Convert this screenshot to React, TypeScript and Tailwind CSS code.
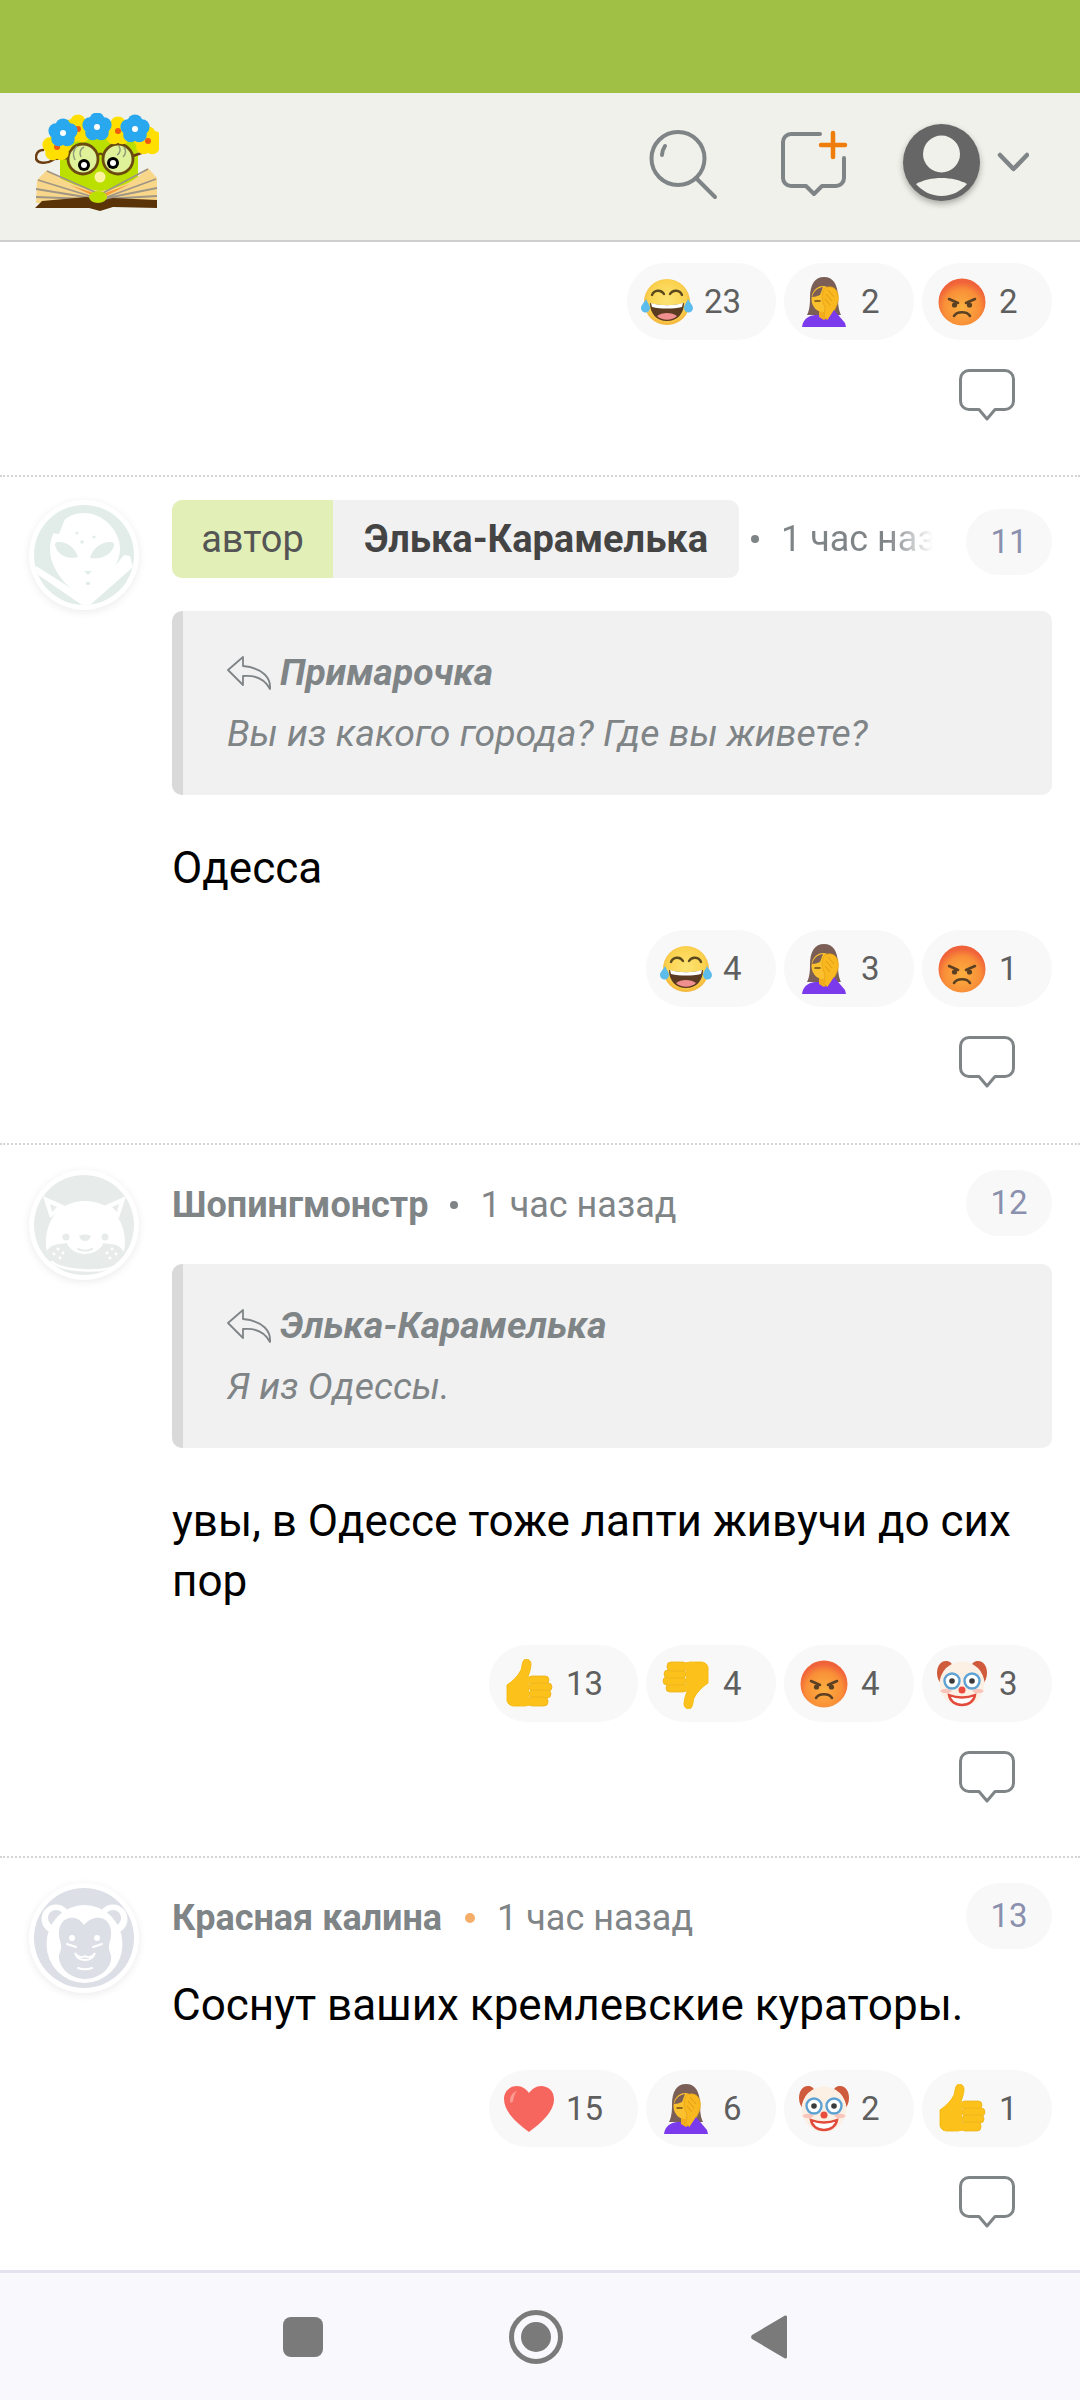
import React from "react";

const font = { fontFamily: "Roboto, 'Noto Sans', sans-serif" };

function Joy() {
  return (
    <svg width="52" height="48" viewBox="0 0 52 48" className="shrink-0">
      <defs>
        <radialGradient id="joyG" cx="50%" cy="45%" r="55%">
          <stop offset="0%" stopColor="#fde373" />
          <stop offset="75%" stopColor="#fbd24f" />
          <stop offset="100%" stopColor="#f3b43a" />
        </radialGradient>
      </defs>
      <circle cx="26" cy="24" r="23" fill="url(#joyG)" />
      <path d="M11 17c2-5 9-6 12-1M29 16c3-5 10-4 12 1" fill="none" stroke="#5c4a1e" strokeWidth="2.4" strokeLinecap="round" />
      <path d="M9 25c10 3 24 3 34 0c0 11-7 18-17 18S9 36 9 25z" fill="#5a3a20" />
      <path d="M10 25c10 3 22 3 32 0l-1 4c-9 2-21 2-30 0z" fill="#fff" />
      <path d="M16 38c5-4 15-4 20 0c-5 5-15 5-20 0z" fill="#ef8f8f" />
      <path d="M5 21c-2 4-5 6-5 9a4.500 4.500 0 0 0 9 0c0-3-3-6-4-9z" fill="#5cbcec" />
      <path d="M47 21c2 4 5 6 5 9a4.500 4.500 0 0 1-9 0c0-3 3-6 4-9z" fill="#5cbcec" />
    </svg>
  );
}

function Facepalm() {
  return (
    <svg width="46" height="52" viewBox="0 0 46 52" className="shrink-0">
      <path d="M9 22C9 8 14 1 23 1s14 7 14 21c0 8 1 13 3 17H6c2-4 3-9 3-17z" fill="#7b5f57" />
      <path d="M1 51c1-7 5-11 13-12h14l6 4 6 8z" fill="#7c3aed" />
      <path d="M18 32h10v9l-5 3-5-3z" fill="#f3ad1c" />
      <ellipse cx="22" cy="23" rx="11.500" ry="13" fill="#fbc02d" />
      <path d="M11 21c2-6 5-9 11-10l-3 8c-3 1-5 2-8 2z" fill="#7b5f57" />
      <path d="M14 25h5" stroke="#6b4a1a" strokeWidth="1.500" strokeLinecap="round" />
      <path d="M23 13c3-3 9-3 12 1 3 4 3 10 1 15l-4 8-5 7-4-3 1-10c-3-5-4-12-1-18z" fill="#f9b81f" stroke="#e2a016" strokeWidth="0.700" />
      <path d="M27 14l6 7M25 18l6 7M24 23l5 6" stroke="#d99a16" strokeWidth="0.900" fill="none" />
      <path d="M25 51l2-8 6-9 11 13 1 4z" fill="#7c3aed" />
    </svg>
  );
}

function Angry() {
  return (
    <svg width="48" height="48" viewBox="0 0 48 48" className="shrink-0">
      <defs>
        <radialGradient id="angG" cx="50%" cy="62%" r="55%">
          <stop offset="0%" stopColor="#fbb040" />
          <stop offset="70%" stopColor="#f98f38" />
          <stop offset="100%" stopColor="#f0623a" />
        </radialGradient>
      </defs>
      <circle cx="24" cy="24" r="23.500" fill="url(#angG)" />
      <path d="M11 21l9 4M37 21l-9 4" stroke="#5b4023" strokeWidth="2.600" strokeLinecap="round" />
      <circle cx="16.500" cy="27" r="2.600" fill="#5b4023" />
      <circle cx="31.500" cy="27" r="2.600" fill="#5b4023" />
      <path d="M16 38c3-5 13-5 16 0" fill="none" stroke="#5b4023" strokeWidth="2.600" strokeLinecap="round" />
    </svg>
  );
}

function ThumbShape() {
  return (
    <>
      <path d="M2 26c6-4 11-9 14-15 1-3 1-8 3-10 3-2 7 0 7 4 0 5-2 9-3 13h-2v29H9c-4 0-7-3-7-6z" fill="#fcc21b" stroke="#f4b400" strokeWidth="0.800" />
      <rect x="23" y="17" width="21" height="8" rx="4" fill="#fcc21b" stroke="#eeb21d" strokeWidth="0.800" />
      <rect x="24" y="24" width="23" height="8" rx="4" fill="#fcc21b" stroke="#eeb21d" strokeWidth="0.800" />
      <rect x="24" y="31" width="22" height="8" rx="4" fill="#fcc21b" stroke="#eeb21d" strokeWidth="0.800" />
      <rect x="23" y="38" width="20" height="9" rx="4" fill="#fcc21b" stroke="#eeb21d" strokeWidth="0.800" />
      <path d="M15 20c3-1 6-2 9-2v29h-9z" fill="#fcc21b" />
    </>
  );
}

function ThumbUp() {
  return (
    <svg width="48" height="50" viewBox="0 0 48 50" className="shrink-0">
      <ThumbShape />
    </svg>
  );
}

function ThumbDown() {
  return (
    <svg width="48" height="50" viewBox="0 0 48 50" className="shrink-0">
      <g transform="rotate(180 24 25)">
        <ThumbShape />
      </g>
    </svg>
  );
}

function Clown() {
  return (
    <svg width="52" height="50" viewBox="0 0 52 50" className="shrink-0">
      <path d="M10 2c-6 0-9 6-9 12 0 5 2 9 5 12l10-20c0-2-3-4-6-4zM42 2c6 0 9 6 9 12 0 5-2 9-5 12L36 6c0-2 3-4 6-4z" fill="#cf5a3c" />
      <circle cx="26" cy="25" r="22.500" fill="#fcf0e4" />
      <path d="M4 32a8 7 0 0 0 12 0 8 7 0 0 0-12 0zM36 32a8 7 0 0 0 12 0 8 7 0 0 0-12 0z" fill="#f7b9b0" opacity="0.800" />
      <circle cx="16" cy="22" r="7.500" fill="#fff" stroke="#5ea2d3" strokeWidth="2.400" />
      <circle cx="36" cy="22" r="7.500" fill="#fff" stroke="#5ea2d3" strokeWidth="2.400" />
      <circle cx="16" cy="22" r="2.800" fill="#3b3b3b" />
      <circle cx="36" cy="22" r="2.800" fill="#3b3b3b" />
      <circle cx="26" cy="31" r="3.500" fill="#ea4d3d" />
      <path d="M13 36c8 3 18 3 26 0-1 6-6 10-13 10s-12-4-13-10z" fill="#fff" stroke="#e24a3b" strokeWidth="2.400" />
    </svg>
  );
}

function Heart() {
  return (
    <svg width="52" height="48" viewBox="0 0 52 48" className="shrink-0">
      <path d="M26 47C14 38 1 27 1 14 1 6 7 1 14 1c5 0 9 3 12 7 3-4 7-7 12-7 7 0 13 5 13 13 0 13-13 24-25 33z" fill="#f7665e" />
      <path d="M7 16c0-5 3-9 7-10-3 3-3 7-4 10-1 2-3 2-3 0z" fill="#fb9c95" />
    </svg>
  );
}

const EMOJI = {
  joy: Joy,
  palm: Facepalm,
  angry: Angry,
  up: ThumbUp,
  down: ThumbDown,
  clown: Clown,
  heart: Heart,
};

function Pill({ e, n }: { e: keyof typeof EMOJI; n: string }) {
  const E = EMOJI[e];
  const wide = n.length > 1;
  return (
    <div
      className={`flex h-[77px] items-center rounded-[38px] bg-[#f8f8f8] ${
        wide ? "w-[149px] gap-[12px] pl-[15px]" : "w-[130px] gap-[12px] pl-[15px]"
      }`}
    >
      <div className="flex w-[50px] shrink-0 justify-center">
        <E />
      </div>
      <span className="text-[33px] leading-none text-[#5f5f5f]">{n}</span>
    </div>
  );
}

function Reactions({ items }: { items: [keyof typeof EMOJI, string][] }) {
  return (
    <div className="flex justify-end gap-[8px]">
      {items.map(([e, n], i) => (
        <Pill key={i} e={e} n={n} />
      ))}
    </div>
  );
}

function ReplyBubble() {
  return (
    <div className="mt-[29px] flex justify-end pr-[37px]">
      <svg width="56" height="52" viewBox="0 0 56 52" fill="none">
        <path
          d="M10 1.500h36a8.500 8.500 0 0 1 8.500 8.500v22a8.500 8.500 0 0 1-8.500 8.500h-10L28 50 20 40.500H10A8.500 8.500 0 0 1 1.500 32V10A8.500 8.500 0 0 1 10 1.500z"
          stroke="#7f8487"
          strokeWidth="3"
          strokeLinejoin="round"
        />
      </svg>
    </div>
  );
}

function AvatarFrame({ children, bg }: { children: React.ReactNode; bg: string }) {
  return (
    <div className="flex h-[110px] w-[110px] shrink-0 items-center justify-center rounded-full bg-white shadow-[0_2px_8px_rgba(0,0,0,0.08)]">
      <div className={`h-[100px] w-[100px] overflow-hidden rounded-full ${bg}`}>{children}</div>
    </div>
  );
}

function AlienAvatar() {
  const g = "#e2edea";
  return (
    <AvatarFrame bg="bg-[#e2edea]">
      <svg width="100" height="100" viewBox="0 0 100 100">
        <path d="M2 61l52 33 36-44 6 1 3 11-43 38-5 2L0 67z" fill="#fff" />
        <path d="M49 8c-9 0-17 4-24 12-6 7-9 15-9 24 0 10 4 20 11 29 8 10 18 18 27 22 9-7 17-16 23-26 5-9 9-17 9-25 0-10-5-20-13-27C66 11 58 8 49 8z" fill="#fff" />
        <path d="M23 37c9-1 18 5 21 15-10 3-20-2-23-11 0-2 0-3 2-4zM78 37c-9-1-19 5-22 16 11 2 21-3 24-12 0-2 0-3-2-4z" fill={g} />
        <path d="M50 66h8l-4 4z" fill={g} />
        <rect x="52" y="77" width="4" height="3" fill={g} />
        <circle cx="43" cy="28" r="1.600" fill={g} />
        <circle cx="60" cy="32" r="1.600" fill={g} />
        <circle cx="48" cy="37" r="1.800" fill={g} />
        <path d="M18 28c3-6 8-11 13-14l-6 15z" fill={g} />
      </svg>
    </AvatarFrame>
  );
}

function BearAvatar() {
  const g = "#e7ecea";
  return (
    <AvatarFrame bg="bg-[#e7ecea]">
      <svg width="100" height="100" viewBox="0 0 100 100">
        <path d="M9 21l22 10-15 12zM92 21L70 31l15 12z" fill="#fff" />
        <path d="M16 29l7 3-5 5zM85 29l-7 3 5 5z" fill={g} />
        <path d="M12 68C12 42 28 26 51 26s40 16 40 42c0 6-2 10-3 14H15c-2-4-3-8-3-14z" fill="#fff" />
        <path d="M11 84c0-10 7-15 15-15 6 0 10-3 25-3s19 3 25 3c8 0 15 5 15 15 0 8-16 15-40 15S11 92 11 84z" fill={g} />
        <ellipse cx="51" cy="64" rx="19" ry="15" fill="#fff" />
        <path d="M18 87c10 9 50 12 66 3" stroke="#fff" strokeWidth="2.500" fill="none" strokeLinecap="round" />
        <circle cx="32" cy="62" r="3.500" fill={g} />
        <circle cx="71" cy="62" r="3.500" fill={g} />
        <path d="M45 61c3-2 9-2 12 0-1 3-3 5-6 5s-5-2-6-5z" fill={g} />
        <path d="M44 74c4 2 10 2 14 0" stroke={g} strokeWidth="2" fill="none" strokeLinecap="round" />
        <g fill="#fff">
          <circle cx="24" cy="74" r="1.400" />
          <circle cx="29" cy="78" r="1.400" />
          <circle cx="20" cy="79" r="1.400" />
          <circle cx="26" cy="83" r="1.400" />
          <circle cx="78" cy="74" r="1.400" />
          <circle cx="73" cy="78" r="1.400" />
          <circle cx="82" cy="79" r="1.400" />
          <circle cx="76" cy="83" r="1.400" />
        </g>
      </svg>
    </AvatarFrame>
  );
}

function MonkeyAvatar() {
  const g = "#dcdfe6";
  return (
    <AvatarFrame bg="bg-[#dcdfe6]">
      <svg width="100" height="100" viewBox="0 0 100 100">
        <circle cx="22" cy="31" r="14.500" fill="#fff" />
        <circle cx="79" cy="31" r="14.500" fill="#fff" />
        <circle cx="22" cy="30" r="8" fill={g} />
        <circle cx="79" cy="30" r="8" fill={g} />
        <ellipse cx="50.500" cy="56" rx="38" ry="39" fill="#fff" />
        <path d="M50 37c5-6 11-8 17-7 9 2 12 13 9 23-2 6-1 9 1 14 2 13-12 24-26 24S24 80 25 67c2-5 3-8 1-14-3-10 0-21 9-23 6-1 11 1 15 7z" fill={g} />
        <circle cx="38" cy="50" r="3" fill="#fff" />
        <circle cx="63" cy="50" r="3" fill="#fff" />
        <path d="M33 56l9 3M68 56l-9 3M41 65c3 4 7 5 10 3 3 2 7 1 10-3-2 6-6 7-10 7s-8-1-10-7zM44 80c4 1.500 10 1.500 14 0" stroke="#fff" strokeWidth="2" fill="none" strokeLinecap="round" />
      </svg>
    </AvatarFrame>
  );
}

function ReplyArrow() {
  return (
    <svg width="45" height="34" viewBox="0 0 45 34" fill="none" className="shrink-0">
      <path
        d="M16 1L1 14l15 15v-9c10-1 21 2 27 13 1-10-6-21-27-23z"
        stroke="#7f8487"
        strokeWidth="1.800"
        strokeLinejoin="round"
      />
    </svg>
  );
}

function Quote({ name, text }: { name: string; text: string }) {
  return (
    <div className="flex h-[184px] flex-col justify-center gap-[24px] rounded-[10px] border-l-[11px] border-l-[#d9d9d9] bg-[#f1f1f1] pl-[44px] italic text-[#7f8487]">
      <div className="flex h-[36px] items-center gap-[8px]">
        <ReplyArrow />
        <span className="text-[37.200px] font-bold leading-none">{name}</span>
      </div>
      <div className="text-[37.400px] leading-[36px]">{text}</div>
    </div>
  );
}

function NumPill({ n, top }: { n: string; top?: boolean }) {
  return (
    <div
      className={`flex h-[66px] w-[86px] shrink-0 items-center justify-center rounded-[33px] bg-[#f8f8f8] text-[33px] text-[#8a90ad] ${
        top ? "mt-[9px]" : ""
      }`}
    >
      {n}
    </div>
  );
}

function Flower({ x, y, c, m, r = 7.5 }: { x: number; y: number; c: string; m: string; r?: number }) {
  const o = r * 0.95;
  return (
    <g>
      <circle cx={x} cy={y - o} r={r} fill={c} />
      <circle cx={x + o} cy={y - o * 0.3} r={r} fill={c} />
      <circle cx={x + o * 0.6} cy={y + o * 0.8} r={r} fill={c} />
      <circle cx={x - o * 0.6} cy={y + o * 0.8} r={r} fill={c} />
      <circle cx={x - o} cy={y - o * 0.3} r={r} fill={c} />
      <circle cx={x} cy={y} r={3} fill={m} />
    </g>
  );
}

function Logo() {
  return (
    <svg width="124" height="98" viewBox="0 0 124 98">
      <path d="M25 24h78v49l-38 18-40-18z" fill="#bbe000" />
      <path d="M18 47C10 52 0 50 1 43c1-4 4-6 7-6" fill="none" stroke="#6b3d10" strokeWidth="2.500" strokeLinecap="round" />
      <path d="M98 43l11-4" stroke="#6b3d10" strokeWidth="2.500" />
      <path d="M19 46l14-1" stroke="#6b3d10" strokeWidth="2.500" />
      <circle cx="48" cy="46" r="15" fill="#dff29a" stroke="#6b4a10" strokeWidth="2.800" />
      <circle cx="83" cy="46" r="15" fill="#dff29a" stroke="#6b4a10" strokeWidth="2.800" />
      <path d="M63 42c2-2 3-2 5 0" stroke="#6b4a10" strokeWidth="2.500" fill="none" />
      <path d="M40 47c-3-6-2-10 2-14M46 44c-2-4-1-8 3-10M82 42c3-2 4-5 2-9M88 44c3-3 3-7 1-10" stroke="#8f9c78" strokeWidth="1.500" fill="none" />
      <circle cx="49" cy="52" r="6" fill="#000" />
      <circle cx="49" cy="52" r="3" fill="#fff" />
      <circle cx="78" cy="50" r="6" fill="#000" />
      <circle cx="78" cy="50" r="3" fill="#fff" />
      <circle cx="65" cy="64" r="5.500" fill="#fcf2a0" />
      <Flower x={22} y={34} c="#ffdf00" m="#f05a10" />
      <Flower x={113} y={28} c="#ffdf00" m="#f05a10" />
      <Flower x={43} y={16} c="#ffdf00" m="#f05a10" />
      <Flower x={83} y={18} c="#ffdf00" m="#f05a10" />
      <Flower x={28} y={20} c="#2aa8ef" m="#fff" />
      <Flower x={62} y={14} c="#2aa8ef" m="#fff" />
      <Flower x={100} y={16} c="#2aa8ef" m="#fff" />
      <path d="M12 57L2 67 1 90h64V78C50 76 30 70 12 57z" fill="#f8d68a" />
      <path d="M113 55l9 10v25H65V78c18-2 36-10 48-23z" fill="#f8d68a" />
      <path d="M35 72l30 10 30-11 -30 15z" fill="#f59a3a" />
      <path d="M12 58l50 22M3 67l55 17M1 76l55 9M1 84l52 2M113 56L68 80M121 66L72 84M122 75l-50 10M122 83l-52 3" stroke="#a09686" strokeWidth="1.800" fill="none" />
      <path d="M0 95l7-7 45-4 13 4 13-3 44 2v8l-44-1-13 4-11-3z" fill="#5a3408" />
      <ellipse cx="63" cy="84" rx="9" ry="6" fill="#bbe000" />
    </svg>
  );
}

function Header() {
  return (
    <header className="flex h-[149px] shrink-0 items-start border-b-[2px] border-b-[#cfcfcf] bg-[#f0f1ea]">
      <div className="mt-[20px] ml-[35px]">
        <Logo />
      </div>
      <div className="ml-auto mt-[31px] mr-[51px]">
        <svg width="380" height="78" viewBox="0 0 380 78" fill="none">
          <g stroke="#7f8487" strokeWidth="4" strokeLinecap="round" strokeLinejoin="round">
            <circle cx="29" cy="34.500" r="26.500" />
            <path d="M47 54l19 19M13 31c0-4 1-6 3-9" />
            <path d="M171 10h-29a8 8 0 0 0-8 8v36a8 8 0 0 0 8 8h15l8 8 8-8h14a8 8 0 0 0 8-8V34" />
            <path d="M351 31l13.500 14 13.500-14" strokeWidth="4.500" />
          </g>
          <path d="M172 21h24M184 9v24" stroke="#ef7d0a" strokeWidth="4.500" strokeLinecap="round" />
        </svg>
      </div>
    </header>
  );
}

function Avatar3D() {
  return (
    <div className="absolute left-[903px] top-[124px] h-[77px] w-[77px] rounded-full bg-[#666666] shadow-[0_3px_6px_rgba(0,0,0,0.3)]">
      <svg width="77" height="77" viewBox="0 0 77 77">
        <circle cx="38.500" cy="30" r="18.500" fill="#f0f1ea" />
        <path d="M13 60c14-8 37-8 51 0-6 7-15 12-25.500 12S19 67 13 60z" fill="#f0f1ea" />
      </svg>
    </div>
  );
}

function Comment({
  avatar,
  head,
  num,
  children,
  pt,
  border = true,
  numTop,
}: {
  avatar: React.ReactNode;
  head: React.ReactNode;
  num: string;
  children: React.ReactNode;
  pt: string;
  border?: boolean;
  numTop?: boolean;
}) {
  return (
    <section className={`flex pl-[29px] pr-[28px] ${pt} ${border ? "border-b-[2px] border-dotted border-b-[#d4d4d4]" : ""}`}>
      <div className="mr-[33px]">{avatar}</div>
      <div className="min-w-0 flex-1">
        <div className={`flex justify-between ${numTop ? "items-start" : "items-center"}`}>
          <div className="min-w-0 flex-1">{head}</div>
          <NumPill n={num} top={numTop} />
        </div>
        {children}
      </div>
    </section>
  );
}

function Meta({ name, time, orange }: { name: string; time: string; orange?: boolean }) {
  return (
    <div className="flex items-center pt-[4px]">
      <span className="text-[36px] font-bold leading-none text-[#7f8487]">{name}</span>
      {orange ? (
        <span className="ml-[23px] mr-[22px] h-[10px] w-[10px] shrink-0 rounded-full bg-[#f5ad6a]" />
      ) : (
        <span className="mx-[22px] h-[8px] w-[8px] shrink-0 rounded-full bg-[#7f8487]" />
      )}
      <span className="text-[36px] leading-none text-[#7f8487]">{time}</span>
    </div>
  );
}

export default function App() {
  return (
    <div className="relative flex h-[2400px] w-[1080px] flex-col overflow-hidden bg-white" style={font}>
      <div className="h-[93px] shrink-0 bg-[#9fbf45]" />
      <Header />
      <Avatar3D />
      <main className="flex-1">
        <div className="border-b-[2px] border-dotted border-b-[#d4d4d4] pr-[28px] pt-[21px] pb-[54px]">
          <Reactions items={[["joy", "23"], ["palm", "2"], ["angry", "2"]]} />
          <ReplyBubble />
        </div>

        <Comment
          pt="pt-[23px]"
          avatar={<AlienAvatar />}
          num="11"
          numTop
          head={
            <div className="flex h-[78px] items-center">
              <div className="flex h-[78px] shrink-0 overflow-hidden rounded-[10px] bg-[#f1f1f1]">
                <div className="flex w-[161px] items-center justify-center bg-[#e2f0b8] text-[38px] text-[#555]">автор</div>
                <div className="flex w-[406px] items-center justify-center text-[38px] font-bold text-[#444]">Элька-Карамелька</div>
              </div>
              <span className="ml-[12px] mr-[22px] h-[8px] w-[8px] shrink-0 rounded-full bg-[#7f8487]" />
              <span className="block w-[152px] shrink-0 overflow-hidden whitespace-nowrap bg-gradient-to-r from-[#7f8487] from-70% to-transparent bg-clip-text text-[36px] text-transparent">
                1 час назад
              </span>
            </div>
          }
        >
          <div className="mt-[33px]">
            <Quote name="Примарочка" text="Вы из какого города? Где вы живете?" />
          </div>
          <div className="mt-[43px] text-[44px] leading-[60px] text-black">Одесса</div>
          <div className="mt-[32px]">
            <Reactions items={[["joy", "4"], ["palm", "3"], ["angry", "1"]]} />
          </div>
          <div className="pb-[55px]">
            <ReplyBubble />
          </div>
        </Comment>

        <Comment
          pt="pt-[25px]"
          avatar={<BearAvatar />}
          num="12"
          head={<Meta name="Шопингмонстр" time="1 час назад" />}
        >
          <div className="mt-[28px]">
            <Quote name="Элька-Карамелька" text="Я из Одессы." />
          </div>
          <div className="mt-[43px] text-[44px] leading-[60px] text-black">
            увы, в Одессе тоже лапти живучи до сих пор
          </div>
          <div className="mt-[34px]">
            <Reactions items={[["up", "13"], ["down", "4"], ["angry", "4"], ["clown", "3"]]} />
          </div>
          <div className="pb-[53px]">
            <ReplyBubble />
          </div>
        </Comment>

        <Comment
          pt="pt-[25px]"
          border={false}
          avatar={<MonkeyAvatar />}
          num="13"
          head={<Meta name="Красная калина" time="1 час назад" orange />}
        >
          <div className="mt-[26px] text-[44px] leading-[60px] text-black">Соснут ваших кремлевские кураторы.</div>
          <div className="mt-[35px]">
            <Reactions items={[["heart", "15"], ["palm", "6"], ["clown", "2"], ["up", "1"]]} />
          </div>
          <ReplyBubble />
        </Comment>
      </main>
      <nav className="flex h-[130px] shrink-0 items-center border-t-[3px] border-t-[#e3e2ee] bg-[#f8f8fd] pl-[283px]">
        <div className="h-[40px] w-[40px] rounded-[8px] bg-[#7a7a7a]" />
        <div className="ml-[186px] flex h-[54px] w-[54px] items-center justify-center rounded-full border-[5px] border-[#7a7a7a]">
          <div className="h-[30px] w-[30px] rounded-full bg-[#7a7a7a]" />
        </div>
        <svg width="38" height="46" viewBox="0 0 38 46" className="ml-[187px]">
          <path d="M35 1.500a1.500 1.500 0 0 1 2 1.500v40a1.500 1.500 0 0 1-2 1.500L2 25a3 3 0 0 1 0-4z" fill="#7a7a7a" />
        </svg>
      </nav>
    </div>
  );
}
